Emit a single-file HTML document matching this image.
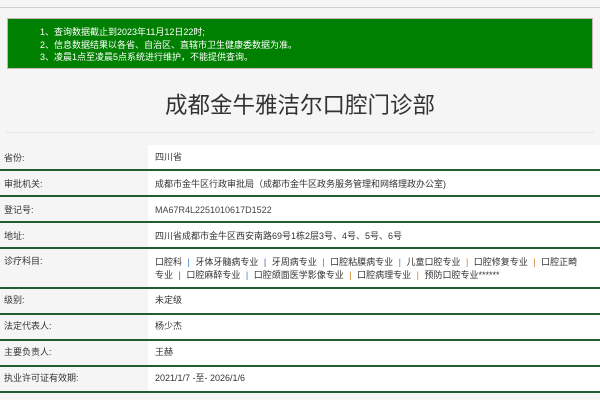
<!DOCTYPE html>
<html><head><meta charset="utf-8"><style>
*{margin:0;padding:0;box-sizing:border-box}
body{width:600px;height:400px;overflow:hidden;background:#f5f5f5;font-family:"Liberation Sans","Noto Sans CJK SC",sans-serif;color:#333;position:relative}
.top{position:absolute;left:0;top:7px;width:600px;border-top:1px solid #d0d0d0}
.notice{position:absolute;left:7px;top:18px;width:586px;height:51px;background:#008000;border:1px solid #c9b7b7;color:#fff;font-size:9px;line-height:12.5px;padding:7px 0 0 32px}
h1{position:absolute;left:0;top:90px;width:600px;text-align:center;font-weight:normal;font-size:22.5px;color:#333;line-height:32px}
.hr{position:absolute;left:6px;top:132px;width:588px;border-top:1px solid #e4e4e4}
.row{position:absolute;left:0;width:600px;border-bottom:2px solid #1e5e32;font-size:9px}
.row .l{position:absolute;left:4px;top:0}
.row .r{position:absolute;left:148px;top:0;right:0;bottom:0;background:#fff;padding-left:7px}
.s{margin:0 5.5px}
</style></head><body>
<div class="top"></div>
<div class="notice">1、查询数据截止到2023年11月12日22时;<br>2、信息数据结果以各省、自治区、直辖市卫生健康委数据为准。<br>3、凌晨1点至凌晨5点系统进行维护，不能提供查询。</div>
<h1>成都金牛雅洁尔口腔门诊部</h1>
<div class="hr"></div>
<div class="row" style="top:145px;height:26px"><div class="r" style="line-height:24px">四川省</div><div class="l" style="line-height:26px">省份:</div></div>
<div class="row" style="top:171px;height:26px"><div class="r" style="line-height:26px">成都市金牛区行政审批局（成都市金牛区政务服务管理和网络理政办公室)</div><div class="l" style="line-height:26px">审批机关:</div></div>
<div class="row" style="top:197px;height:26px"><div class="r" style="line-height:26px;color:#444">MA67R4L2251010617D1522</div><div class="l" style="line-height:26px">登记号:</div></div>
<div class="row" style="top:223px;height:26px"><div class="r" style="line-height:26px">四川省成都市金牛区西安南路69号1栋2层3号、4号、5号、6号</div><div class="l" style="line-height:26px">地址:</div></div>
<div class="row" style="top:249px;height:40px"><div class="r" style="line-height:12.5px;padding-top:7px;padding-right:14px;word-break:break-all">口腔科<span class="s" style="color:#3a7bd5">|</span>牙体牙髓病专业<span class="s" style="color:#8040a0">|</span>牙周病专业<span class="s" style="color:#3a7bd5">|</span>口腔粘膜病专业<span class="s" style="color:#3a7bd5">|</span>儿童口腔专业<span class="s" style="color:#d08020">|</span>口腔修复专业<span class="s" style="color:#d08020">|</span>口腔正畸专业<span class="s" style="color:#8040a0">|</span>口腔麻醉专业<span class="s" style="color:#3a7bd5">|</span>口腔颌面医学影像专业<span class="s" style="color:#d08020">|</span>口腔病理专业<span class="s" style="color:#d08020">|</span>预防口腔专业******</div><div class="l" style="line-height:24px">诊疗科目:</div></div>
<div class="row" style="top:289px;height:26px"><div class="r" style="line-height:22px">未定级</div><div class="l" style="line-height:22px">级别:</div></div>
<div class="row" style="top:315px;height:26px"><div class="r" style="line-height:22px">杨少杰</div><div class="l" style="line-height:22px">法定代表人:</div></div>
<div class="row" style="top:341px;height:26px"><div class="r" style="line-height:22px">王赫</div><div class="l" style="line-height:22px">主要负责人:</div></div>
<div class="row" style="top:367px;height:26px"><div class="r" style="line-height:22px">2021/1/7 -至- 2026/1/6</div><div class="l" style="line-height:22px">执业许可证有效期:</div></div>
</body></html>
